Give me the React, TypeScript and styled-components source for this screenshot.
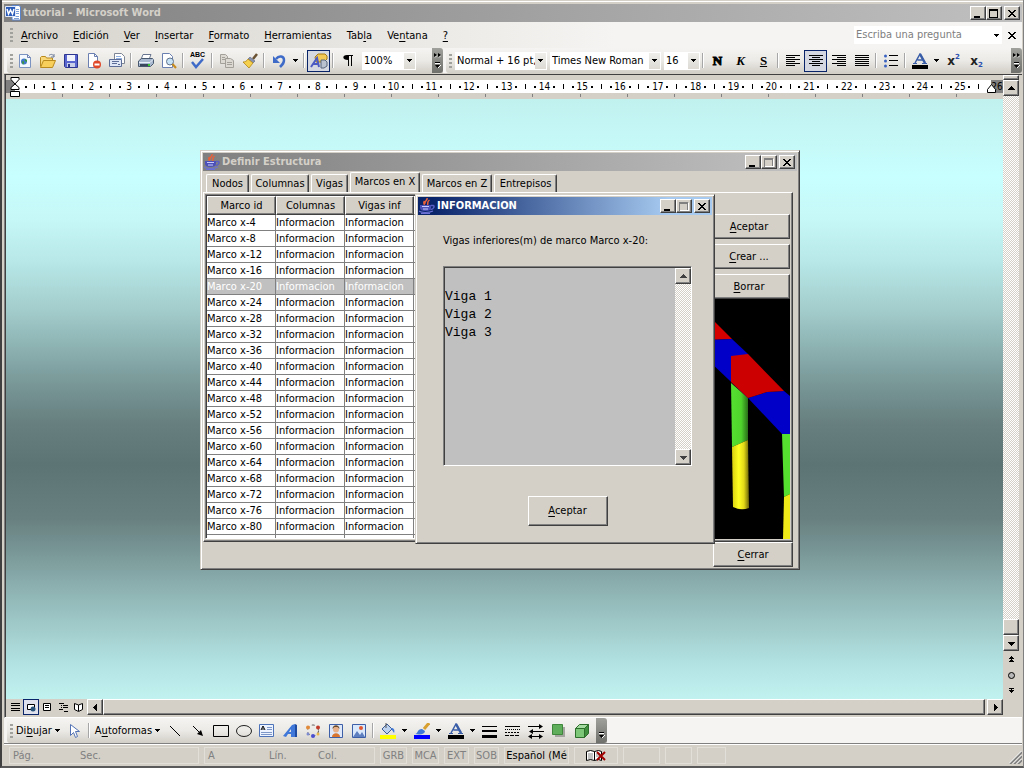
import React from "react";
import styled, { createGlobalStyle, css } from "styled-components";

const FACE = "#d4d0c8";
const SHADOW = "#808080";
const DARK = "#404040";
const NAVY = "#0a246a";

const Global = createGlobalStyle`
  *, *::before, *::after { box-sizing: border-box; }
  body { margin: 0; background: ${FACE}; }
  body, button, select, input, table {
    font: 11px/14px "DejaVu Sans Condensed", "DejaVu Sans", sans-serif;
    color: #000;
  }
  button { margin: 0; padding: 0; border: 0; background: none; }
  svg { display: block; flex: none; }
  u { text-underline-offset: 2px; }
`;

const raised = css`
  border: 1px solid;
  border-color: #fff ${DARK} ${DARK} #fff;
  box-shadow: inset -1px -1px ${SHADOW};
  background: ${FACE};
`;

/* ---------- application frame ---------- */

const Frame = styled.div`
  display: flex;
  flex-direction: column;
  min-height: 100vh;
  border-left: 2px solid ${DARK};
  border-right: 1px solid ${SHADOW};
  border-bottom: 2px solid #5a5a5a;
  padding: 1px 1px 0 2px;
  background: ${FACE};
`;

const TitleBar = styled.header<{ $active?: boolean }>`
  display: flex;
  align-items: center;
  gap: 2px;
  height: 18px;
  flex: none;
  padding: 0 2px 0 1px;
  font-weight: bold;
  color: ${(p) => (p.$active ? "#fff" : FACE)};
  background: ${(p) =>
    p.$active
      ? "linear-gradient(90deg, #0a246a 5%, #a6caf0 85%)"
      : "linear-gradient(90deg, #808080, #c0c0c0)"};
`;

const TitleText = styled.h1`
  flex: 1;
  margin: 0;
  font: inherit;
  white-space: nowrap;
`;

const TopEdge = styled.div`
  height: 3px;
  flex: none;
  margin: 0 -1px 0 -2px;
  border-top: 1px solid #fff;
`;

const WinButtons = styled.div`
  display: flex;
`;

const WinButton = styled.button<{ $gap?: boolean }>`
  ${raised}
  width: 16px;
  height: 14px;
  display: flex;
  align-items: center;
  justify-content: center;
  margin-left: ${(p) => (p.$gap ? 2 : 0)}px;
`;

const MenuBar = styled.nav`
  display: flex;
  align-items: center;
  height: 26px;
  flex: none;
  padding: 0 0 0 6px;
  background: linear-gradient(90deg, #d6d3cc, #f5f4f2 60%);
`;

const Grip = styled.span`
  width: 3px;
  height: 14px;
  flex: none;
  background: repeating-linear-gradient(#a0a09c 0 2px, transparent 2px 4px);
`;

const MenuButton = styled.button`
  padding: 4px 7px 2px 8px;
`;

const AskBox = styled.div`
  display: flex;
  align-items: center;
  margin-left: auto;
  width: 148px;
  height: 18px;
  background: #fff;
`;

const AskInput = styled.input`
  flex: 1;
  min-width: 0;
  border: 0;
  padding: 0 2px;
  background: transparent;
  outline: 0;
  &::placeholder { color: ${SHADOW}; opacity: 1; }
`;

const CloseDocument = styled.button`
  display: flex;
  align-items: center;
  justify-content: center;
  width: 20px;
  height: 18px;
`;

const ArrowButton = styled.button`
  width: 11px;
  height: 18px;
  display: flex;
  align-items: center;
  justify-content: center;
`;

/* ---------- toolbars ---------- */

const BarRow = styled.div`
  display: flex;
  height: 25px;
  flex: none;
  gap: 3px;
  padding-left: 3px;
  background: #f5f4f2;
`;

const Bar = styled.div<{ $grow?: boolean }>`
  display: flex;
  align-items: center;
  flex: ${(p) => (p.$grow ? "1" : "none")};
  min-width: 0;
  padding-left: 3px;
  border-radius: 3px 0 0 3px;
  background: linear-gradient(#f5f4f2, #eceae6 50%, #d2cfc8);
`;

const Tool = styled.button<{ $on?: boolean }>`
  width: 23px;
  height: 22px;
  flex: none;
  display: flex;
  align-items: center;
  justify-content: center;
  ${(p) => p.$on && `background: #d5d8e0; border: 1px solid ${NAVY};`}
`;

const TextTool = styled.button`
  display: flex;
  align-items: center;
  gap: 3px;
  height: 22px;
  padding: 0 3px;
  white-space: nowrap;
`;

const Rule = styled.span`
  width: 2px;
  height: 15px;
  flex: none;
  margin: 0 2px;
  background: linear-gradient(90deg, #a6a6a6 50%, #fff 50%);
`;

const Combo = styled.span<{ $w: number }>`
  display: flex;
  width: ${(p) => p.$w}px;
  height: 18px;
  flex: none;
  margin-left: 3px;
  background: #fff;
  padding: 1px 1px 1px 0;
`;

const ComboSelect = styled.select`
  appearance: none;
  flex: 1;
  min-width: 0;
  border: 0;
  padding: 0 0 0 2px;
  background: #fff;
  outline: 0;
`;

const ComboArrow = styled.span`
  width: 11px;
  display: flex;
  align-items: center;
  justify-content: center;
  background: linear-gradient(#efeeea, #dcdad3);
`;

const Cap = styled.button`
  display: flex;
  flex-direction: column;
  align-items: center;
  justify-content: space-between;
  width: 11px;
  align-self: stretch;
  flex: none;
  padding: 5px 0 4px;
  border-radius: 0 3px 3px 0;
  background: linear-gradient(#a0a09c, #6f6f6c);
`;

const Spacer = styled.span<{ $w?: number }>`
  flex: ${(p) => (p.$w ? `0 0 ${p.$w}px` : "1")};
`;

/* ---------- work area ---------- */

const Work = styled.div`
  display: flex;
  flex: 1;
  min-height: 0;
  margin-top: 1px;
  padding: 0 3px 2px 1px;
  border-top: 1px solid ${DARK};
  border-left: 1px solid ${SHADOW};
  border-bottom: 1px solid #fff;
  box-shadow: inset 1px 0 ${DARK};
`;

const Sheet = styled.main`
  display: flex;
  flex-direction: column;
  flex: 1;
  min-width: 0;
`;

const RulerBox = styled.div`
  height: 24px;
  flex: none;
  padding-top: 5px;
`;

const RulerStrip = styled.div`
  display: flex;
  height: 13px;
  background: #fff;
  line-height: 13px;
  font-size: 10px;
`;

const RulerEdge = styled.span<{ $w: number }>`
  display: flex;
  align-items: center;
  justify-content: center;
  width: ${(p) => p.$w}px;
  flex: none;
  background: ${SHADOW};
`;

const RulerCells = styled.div`
  display: flex;
  flex: 1;
  min-width: 0;
`;

const Unit = styled.span`
  display: grid;
  grid-template-columns: repeat(4, minmax(0, 1fr));
  flex: 1;
`;

const Slot = styled.span<{ $w?: number }>`
  display: flex;
  align-items: center;
  justify-content: center;
  ${(p) => p.$w && `width: ${p.$w}px; flex: none;`}
`;

const Mark = styled.i<{ $h: number }>`
  width: ${(p) => (p.$h > 2 ? 1 : 2)}px;
  height: ${(p) => p.$h}px;
  flex: none;
  background: #000;
`;

const TabTicks = styled.div`
  display: flex;
  height: 3px;
  margin: 1px 0 0 56px;
  span { flex: 1; border-left: 1px solid ${SHADOW}; }
`;

const Indent = styled.span`
  position: relative;
  width: 0;
  svg { position: absolute; left: -5px; top: -3px; }
`;

const RightIndent = styled(Indent)`
  svg { top: 3px; left: -4px; }
`;

const Desk = styled.section`
  position: relative;
  flex: 1;
  min-height: 600px;
  overflow: hidden;
  background: linear-gradient(
    #c1f1ef, #c8ffff 13%, #c6f8f7 20%, #b8e8e8 27%, #a3cdcc 35%, #95bcbc 39%, #7a9999 47%,
    #677f7f 54%, #5d7474 61%, #698080 70%, #7b9999 76%, #95bbbb 84%, #b2e2e2 94%, #c2f2f0
  );
`;

const BottomRow = styled.div`
  display: flex;
  align-items: center;
  height: 16px;
  flex: none;
  padding-left: 1px;
`;

const ViewButton = styled.button<{ $on?: boolean }>`
  width: 16px;
  height: 16px;
  flex: none;
  display: flex;
  align-items: center;
  justify-content: center;
  ${(p) => p.$on && `border: 1px solid ${NAVY}; background: #dfe2ec;`}
`;

const ScrollButton = styled.button<{ $h?: number }>`
  ${raised}
  width: 16px;
  height: ${(p) => p.$h ?? 16}px;
  flex: none;
  display: flex;
  align-items: center;
  justify-content: center;
`;

const HThumb = styled.div`
  ${raised}
  flex: 1;
  height: 16px;
  margin-right: 2px;
`;

const VScroll = styled.div`
  display: flex;
  flex-direction: column;
  width: 16px;
  flex: none;
`;

const Track = styled.div`
  flex: 1;
  background: repeating-conic-gradient(#fff 0 25%, ${FACE} 0 50%) 0 0 / 2px 2px;
`;

const BrowseButton = styled.button`
  height: 16px;
  display: flex;
  align-items: center;
  justify-content: center;
`;

const StatusBar = styled.footer`
  display: flex;
  gap: 5px;
  height: 23px;
  flex: none;
  padding: 3px 0 2px 5px;
  border-top: 1px solid ${SHADOW};
  box-shadow: inset 0 1px #fff;
  color: ${SHADOW};
`;

const StatusCell = styled.div<{ $w: number; $on?: boolean; $center?: boolean }>`
  display: flex;
  align-items: center;
  justify-content: ${(p) => (p.$center ? "center" : "flex-start")};
  width: ${(p) => p.$w}px;
  overflow: hidden;
  white-space: nowrap;
  border: 1px solid #e2dfd9;
  padding: 0 ${(p) => (p.$center ? 0 : 3)}px;
  color: ${(p) => (p.$on ? "#000" : SHADOW)};
`;

const StatusField = styled.span<{ $w: number }>`
  width: ${(p) => p.$w}px;
`;

const Resize = styled.span`
  margin-left: auto;
  align-self: flex-end;
`;

/* ---------- java windows ---------- */

const JavaWindow = styled.section<{ $x: number; $y: number; $w: number; $h: number }>`
  position: absolute;
  left: ${(p) => p.$x}px;
  top: ${(p) => p.$y}px;
  width: ${(p) => p.$w}px;
  height: ${(p) => p.$h}px;
  display: flex;
  flex-direction: column;
  padding: 2px;
  background: ${FACE};
  border: 1px solid;
  border-color: ${FACE} ${DARK} ${DARK} ${FACE};
  box-shadow: inset 1px 1px #fff, inset -1px -1px ${SHADOW};
`;

const Tabs = styled.div`
  display: flex;
  align-items: flex-end;
  gap: 2px;
  height: 21px;
  padding-left: 3px;
`;

const Tab = styled.button<{ $on?: boolean; $w: number }>`
  width: ${(p) => p.$w}px;
  height: ${(p) => (p.$on ? 20 : 18)}px;
  padding-bottom: ${(p) => (p.$on ? 1 : 0)}px;
  border: 1px solid;
  border-color: #fff ${DARK} transparent #fff;
  border-bottom: 0;
  border-radius: 2px 2px 0 0;
  box-shadow: inset -1px 0 ${SHADOW};
  white-space: nowrap;
`;

const TabPanel = styled.div`
  display: flex;
  flex: 1;
  min-height: 0;
  margin-right: 4px;
  padding: 1px 2px 0 1px;
  border: 1px solid;
  border-color: #fff ${DARK} ${DARK} #fff;
  box-shadow: inset -1px -1px ${SHADOW};
`;

const TableBox = styled.div`
  flex: 1;
  margin-right: 3px;
  margin-bottom: 2px;
  overflow: hidden;
  background: #fff;
  border: 1px solid;
  border-color: ${SHADOW} #fff #fff ${SHADOW};
  box-shadow: inset 1px 1px ${DARK};
  padding: 1px 0 0 1px;
`;

const Grid = styled.table`
  width: 100%;
  table-layout: fixed;
  border-collapse: separate;
  border-spacing: 0;
  th, td { padding: 0; overflow: hidden; white-space: nowrap; }
  th:not(:last-child) { width: 69px; }
`;

const HeadCell = styled.th`
  ${raised}
  height: 19px;
  font-weight: normal;
`;

const Row = styled.tr<{ $on?: boolean }>`
  td {
    height: 16px;
    border-right: 1px solid ${SHADOW};
    border-bottom: 1px solid ${SHADOW};
    color: ${(p) => (p.$on ? "#fff" : "#000")};
    background: ${(p) => (p.$on ? "#c0c0c0" : "#fff")};
  }
`;

const StubRow = styled.tr`
  td { height: 3px; border-right: 1px solid ${SHADOW}; }
`;

const SideColumn = styled.div`
  display: flex;
  flex-direction: column;
  gap: 5px;
  width: 82px;
  padding-top: 20px;
  margin-bottom: 2px;
`;

const PushButton = styled.button<{ $w?: number; $h?: number }>`
  ${raised}
  width: ${(p) => (p.$w ? `${p.$w}px` : "auto")};
  height: ${(p) => p.$h ?? 25}px;
  flex: none;
`;

const View3D = styled.div`
  flex: 1;
  min-height: 0;
  margin-top: -5px;
  background: #000;
`;

const Footer = styled.div`
  display: flex;
  justify-content: flex-end;
  padding-right: 4px;
`;

const InfoBody = styled.div`
  display: flex;
  flex-direction: column;
  flex: 1;
  padding: 19px 20px 15px 25px;
`;

const Message = styled.label`
  margin-bottom: 18px;
`;

const TextPane = styled.div`
  display: flex;
  height: 200px;
  border: 1px solid;
  border-color: ${SHADOW} #fff #fff ${SHADOW};
  box-shadow: inset 1px 1px ${DARK};
  background: #c0c0c0;
  padding: 1px 0 0 1px;
`;

const TextArea = styled.textarea`
  flex: 1;
  min-width: 0;
  border: 0;
  padding: 2px 0;
  resize: none;
  outline: 0;
  overflow: hidden;
  color: #000;
  background: transparent;
  font: 13px/18px "Liberation Mono", monospace;
`;

const PaneScroll = styled(VScroll)`
  background: ${FACE};
`;

const ButtonRow = styled.div`
  display: flex;
  justify-content: center;
  margin-top: 30px;
`;

/* ---------- glyphs ---------- */

const Ico = ({ children, w = 16, h = 16, vb }: { children: React.ReactNode; w?: number; h?: number; vb?: string }) => (
  <svg width={w} height={h} viewBox={vb ?? `0 0 ${w} ${h}`} fill="none" aria-hidden="true">
    {children}
  </svg>
);

type Dir = "up" | "down" | "left" | "right";
const triangles: Record<Dir, string> = {
  down: "M0 2h7v1h-1v1h-1v1h-1v1h-1v-1h-1v-1h-1v-1h-1z",
  up: "M0 5h7v-1h-1v-1h-1v-1h-1v-1h-1v1h-1v1h-1v1h-1z",
  left: "M5 0v7h-1v-1h-1v-1h-1v-1h-1v-1h1v-1h1v-1h1v-1z",
  right: "M2 0v7h1v-1h1v-1h1v-1h1v-1h-1v-1h-1v-1h-1v-1z",
};
const Tri = ({ dir, color = "#000" }: { dir: Dir; color?: string }) => (
  <Ico w={7} h={7}><path d={triangles[dir]} fill={color} /></Ico>
);
const Caret = () => <Ico w={5} h={3}><path d="M0 0h5v1h-1v1h-1v1h-1v-1h-1v-1h-1z" fill="#000" /></Ico>;

const MinGlyph = () => <Ico w={10} h={9}><path d="M1 7h6v2h-6z" fill="#000" /></Ico>;
const MaxGlyph = ({ off }: { off?: boolean }) => (
  <Ico w={10} h={9}>
    <path fillRule="evenodd" d="M0 0h9v9h-9zM1 2v6h7v-6z" fill={off ? "#808080" : "#000"} />
    {off && <path d="M9.500 1v8M1 8.500h8" stroke="#fff" />}
  </Ico>
);
const CloseGlyph = () => (
  <Ico w={8} h={7}>
    <path fill="#000" d="M0 0h2v1h1v1h2v-1h1v-1h2v1h-1v1h-1v1h-1v1h1v1h1v1h1v1h-2v-1h-1v-1h-2v1h-1v1h-2v-1h1v-1h1v-1h1v-1h-1v-1h-1v-1h-1z" />
  </Ico>
);

const JavaCup = () => (
  <Ico>
    <path d="M8 0c1 2-3 3-2 6M10.500 2c-3 2-1 3-2 5M5.500 3c-1 1-1 2 0 4" stroke="#e8603a" strokeWidth="1.500" />
    <path d="M1 7h11v3c0 2-2 3-5.500 3S1 12 1 10z" fill="#4a50b8" />
    <path d="M3 8.500h7M4 11h5" stroke="#c7caff" />
    <path d="M12 7.500h2c2 0 1 4-2.500 4" stroke="#5a5fc4" strokeWidth="1.500" />
    <path d="M0 13c2 2 10 2 14 0M2 15.500h9" stroke="#6a70d4" strokeWidth="1.200" />
  </Ico>
);

const WordLogo = () => (
  <Ico>
    <path d="M7 .5h7l1.500 1.500v13h-8.500z" fill="#fff" stroke="#5b83c8" />
    <path d="M11 4.500h3M11 6.500h3M11 8.500h3M9 11.500h5M9 13.500h5" stroke="#7ea0d8" />
    <path d="M.5 1.500h10v10h-10z" fill="#2c5cb8" stroke="#dfe8f8" />
    <path d="M2 4l1.500 5 2-4 2 4L9 4" stroke="#fff" strokeWidth="1.500" />
  </Ico>
);

const page = <path d="M3.500.5h6l3 3v11h-9z" fill="#fff" stroke="#6b7fb0" />;
const icons = {
  fresh: <Ico><path d="M2.500 1.500h8l3 3v10h-11z" fill="#f4f8ff" stroke="#7b93c0" /><path d="M10.500 1.500v3h3" stroke="#6b7fb0" /><circle cx="7" cy="8.500" r="3" fill="#3f78c9" /><path d="M5 9c1-2 2-1 2 1l-1 2zM8 6l2 1v2l-2-1z" fill="#3d9a38" /></Ico>,
  open: <Ico><path d="M.5 13.500v-9l1-1h4l1 1.500h6v3" fill="#f8d878" stroke="#b98a1e" /><path d="M.5 14.500l3-7h12l-3 7z" fill="#f9cf5c" stroke="#b98a1e" /><path d="M9 2.500c2-2 4-1 5 1m0-2.500v3h-3" stroke="#6f7f9c" /></Ico>,
  save: <Ico><path d="M1.500 1.500h13v13h-12l-1-1z" fill="#5a66cf" stroke="#2c3691" /><path d="M4 2h8v6h-8z" fill="#f0f3fb" /><path d="M4 10h8v4h-8z" fill="#c8cde8" /><path d="M5 11h2v3h-2z" fill="#2c3691" /></Ico>,
  permit: <Ico><path d="M2.500.5h6l3 3v11h-9z" fill="#fff" stroke="#6b7fb0" /><path d="M8.500.5v3h3" stroke="#6b7fb0" /><circle cx="11" cy="11.500" r="4" fill="#e0482a" /><path d="M8.500 10.500h5v2h-5z" fill="#fff" /></Ico>,
  mail: <Ico><path d="M5.500.5h7l3 3v7h-10z" fill="#fff" stroke="#7d8494" /><path d="M7 3.500h5M7 5.500h6" stroke="#8fb0e0" /><path d="M.5 6.500h12v7h-12z" fill="#dfe7f6" stroke="#5c6e98" /><path d="M3 8.500h7M3 10.500h5M9 11.500h2" stroke="#5c6e98" /></Ico>,
  print: <Ico><path d="M5 1.500h8l-2 5h-8z" fill="#fff" stroke="#67758f" /><path d="M.5 8l3-2.500h11l1 1v4l-3 3h-12z" fill="#a8b9cf" stroke="#48586f" /><path d="M1 9.500h11l3-3" stroke="#e8f0fa" /><path d="M2 12h9" stroke="#3a475c" strokeWidth="2" /><path d="M10 11h2v2h-2z" fill="#38d030" /></Ico>,
  preview: <Ico><path d="M1.500.5h7l3 3v11h-10z" fill="#fff" stroke="#6b7fb0" /><circle cx="9" cy="8.500" r="3.500" fill="#c7e2f5" stroke="#61728c" /><path d="M11.500 11l3.500 4" stroke="#c78a1c" strokeWidth="2" /></Ico>,
  copy: <Ico><path d="M1.500 1.500h5l2 2v7h-7z" fill="#dcd9d2" stroke="#a3a09a" /><path d="M6.500 5.500h5l3 2v7h-8z" fill="#dcd9d2" stroke="#a3a09a" /><path d="M3 4.500h3M3 6.500h3M8 9.500h5M8 11.500h5" stroke="#a3a09a" /></Ico>,
  brush: <Ico><path d="M15 1l-4 5" stroke="#6a5233" strokeWidth="2.500" /><path d="M8 4l5 4-2 2-5-4z" fill="#8793ae" stroke="#566080" strokeWidth=".6" /><path d="M6 6l5 4-4 5-6-6c2 0 4-1 5-3z" fill="#f5d04c" stroke="#b18516" strokeWidth=".8" /></Ico>,
  undo: <Ico><path d="M5 6c3-4 8-3 8 1 0 3-1 4-4 7" stroke="#3f6bc8" strokeWidth="2.500" /><path d="M2 3v7h7z" fill="#3f6bc8" /></Ico>,
  shapes: <Ico w={18}><path d="M5 4l3-3h7l2 2v3l-3 3h-8z" fill="#f2c957" stroke="#a77a13" /><path d="M11 7h4l2 2v4l-3 2h-3z" fill="#b9c2ce" stroke="#59677c" /><path d="M1 14l6-9 2 9M3 11h6" stroke="#4c5bc4" strokeWidth="2" /></Ico>,
  pilcrow: <Ico w={12}><path d="M5 2h6v1h-1v10h-1v-10h-2v10h-1v-6c-6 0-6-5-1-5z" fill="#000" /></Ico>,
  bullets: <Ico>{[2, 7, 12].map((y) => <React.Fragment key={y}><circle cx="2.500" cy={y + 1} r="1.500" fill="#3a62c0" /><path d={`M6 ${y}h9v1h-9z`} fill="#000" /></React.Fragment>)}</Ico>,
  pointer: <Ico><path d="M4.500 1.500v11l3-3 2 5 2-1-2-5h4z" fill="#fff" stroke="#5272b4" /></Ico>,
  line: <Ico><path d="M3 3l10 10" stroke="#000" /></Ico>,
  arrow: <Ico><path d="M3 3l8 8" stroke="#000" /><path d="M13 13l-6-2 4-4z" fill="#000" /></Ico>,
  rect: <Ico><path d="M.5 2.500h15v11h-15z" stroke="#000" /></Ico>,
  oval: <Ico><ellipse cx="8" cy="8" rx="7.500" ry="5.500" stroke="#222" /></Ico>,
  textbox: <Ico><path d="M.5 1.500h14v12h-14z" fill="#eef4ff" stroke="#4d72b8" /><path d="M2 7l2-4 2 4M3 6h2" stroke="#000" /><path d="M8 4.500h5M8 6.500h5M2 9.500h11M2 11.500h11" stroke="#7d97c8" /></Ico>,
  wordart: <Ico><path d="M1 13l9-11 3-1v13h-4v-3h-3l-2 3zM7 9h2v-3z" fill="#3f78d8" fillRule="evenodd" /><path d="M13 1l2 1v12h-2z" fill="#1f4ba0" /></Ico>,
  diagram: <Ico><circle cx="8" cy="7.500" r="5.500" stroke="#555" strokeDasharray="3 3" /><circle cx="3" cy="4.500" r="2" fill="#e08a3a" /><circle cx="13" cy="4.500" r="2" fill="#c23c2a" /><circle cx="8" cy="13" r="2" fill="#4a4fd0" /><circle cx="3" cy="11" r="1.500" fill="#7d8bd0" /><circle cx="13" cy="11" r="1.500" fill="#eab84a" /></Ico>,
  clipart: <Ico><path d="M1.500 1.500h13v13h-13z" fill="#dfe8f8" stroke="#3c5fa8" /><circle cx="8" cy="6.500" r="3" fill="#e8b088" /><path d="M4.500 6c0-5 7-5 7 0l-2-2h-3z" fill="#6b4a2a" /><path d="M4 14c0-5 8-5 8 0z" fill="#d8752f" /></Ico>,
  picture: <Ico><path d="M1.500 1.500h13v13h-13z" fill="#d9e8fb" stroke="#3c5fa8" /><circle cx="10" cy="5" r="2" fill="#e0562f" /><path d="M2 14l4-6 3 4 2-3 3 5z" fill="#5d7fc0" /></Ico>,
  fill: <Ico><path d="M2 6l5-5 5 5-5 5z" fill="#bcd2ef" stroke="#3d5d94" /><path d="M11 5c3 0 4 2 3 5l-2-3z" fill="#3f78d8" /><path d="M6 0v5" stroke="#555" /><path d="M0 12h16v4H0z" fill="#ff0" /></Ico>,
  pen: <Ico><path d="M15 0l-5 6" stroke="#d8a030" strokeWidth="3" /><path d="M1 11c3 0 2-5 7-5l3 2c0 3-4 4-10 3z" fill="#3f78d8" /><path d="M0 12h16v4H0z" fill="#00f" /></Ico>,
  fontColor: <Ico><path d="M3 10l5-9 5 9M5.500 7h5" stroke="#3a5da8" strokeWidth="1.500" /><path d="M8 1l5 9" stroke="#3a5da8" strokeWidth="2.500" /><path d="M1 10.500h4M10 10.500h5" stroke="#3a5da8" /><path d="M0 12h16v4H0z" fill="#000" /></Ico>,
  weights: <Ico><path d="M0 3h15v1H0zM0 7h15v2H0zM0 12h15v3H0z" fill="#000" /></Ico>,
  dashes: <Ico><path d="M0 3.500h15" stroke="#000" /><path d="M0 6.500h15" stroke="#000" strokeDasharray="1 1" /><path d="M0 9.500h15" stroke="#000" strokeDasharray="2 1" /><path d="M0 12.500h15" stroke="#000" strokeDasharray="4 1" /></Ico>,
  arrows: <Ico><path d="M0 3.500h12M4 8.500h12M3 13.500h10" stroke="#000" /><path d="M11 1l4 2.500-4 2.500zM5 6L1 8.500 5 11zM4 11L0 13.500 4 16zM11 11l4 2.500-4 2.500z" fill="#000" /></Ico>,
  shadow: <Ico><path d="M4 4h10v10H4z" fill="#a5a5a0" /><path d="M1.500 1.500h10v10h-10z" fill="#5fae5c" stroke="#3d863b" /></Ico>,
  cube: <Ico><path d="M1.500 5.500h9v9h-9z" fill="#7cc878" stroke="#2d6e2c" /><path d="M1.500 5.500l4-4h9l-4 4z" fill="#a5dba0" stroke="#2d6e2c" /><path d="M14.500 1.500v9l-4 4v-9z" fill="#3f8f3e" stroke="#2d6e2c" /></Ico>,
};

const AlignIcon = ({ mode }: { mode: "l" | "c" | "r" | "j" }) => (
  <Ico w={14} h={12}>
    {[0, 2, 4, 6, 8, 10].map((y, i) => {
      const w = mode === "j" || i % 2 === 0 ? 14 : mode === "c" ? 8 : 9;
      const x = mode === "r" ? 14 - w : mode === "c" ? (14 - w) / 2 : 0;
      return <path key={y} d={`M${x} ${y}h${w}v1h-${w}z`} fill="#000" />;
    })}
  </Ico>
);

const Letter = styled.span<{ $italic?: boolean; $under?: boolean }>`
  font: ${(p) => (p.$italic ? "italic " : "")}bold 13px/16px "Liberation Serif", serif;
  text-decoration: ${(p) => (p.$under ? "underline" : "none")};
  -webkit-text-stroke: ${(p) => (p.$italic || p.$under ? 0 : 1)}px #000;
`;

const Script = styled.span`
  display: flex;
  font: bold 12px/16px "DejaVu Sans", sans-serif;
  color: #222;
  sup, sub { font-size: 7px; line-height: 8px; color: #2a4fb0; }
  sup { align-self: flex-start; }
  sub { align-self: flex-end; }
`;

const SpellLabel = styled.span`
  display: flex;
  flex-direction: column;
  align-items: center;
  font: bold 7px/6px "Liberation Sans", sans-serif;
`;

const CapMarks = ({ chevrons = true }: { chevrons?: boolean }) => (
  <>
    {chevrons ? <Ico w={7} h={5}><path d="M0 0l3 2L0 4zM4 0l3 2L4 4z" fill="#000" /><path d="M1 4.500l2-2M5 4.500l2-2" stroke="#fff" strokeWidth=".8" /></Ico> : <span />}
    <Ico w={7} h={7}><path d="M1 0h5v1H1z" fill="#000" /><path d="M1 1h5v1H1z" fill="#fff" /><path d="M1 3h5l-2.500 3z" fill="#000" /><path d="M4 6l3-3" stroke="#fff" /></Ico>
  </>
);

const Scene = () => (
  <svg width="100%" height="100%" viewBox="708 299 82 240" preserveAspectRatio="xMaxYMin slice" role="img" aria-label="Vista de la estructura">
    <defs>
      <linearGradient id="green"><stop offset="0" stopColor="#55e030" /><stop offset=".6" stopColor="#4fd42c" /><stop offset="1" stopColor="#2a6e18" /></linearGradient>
      <linearGradient id="yellow"><stop offset="0" stopColor="#d8d010" /><stop offset=".4" stopColor="#ffff20" /><stop offset=".7" stopColor="#e4da18" /><stop offset="1" stopColor="#6b6508" /></linearGradient>
    </defs>
    <path d="M708 315l24 24-24 1z" fill="#d40000" />
    <path d="M708 340l24-1 16 15v44l-40-38z" fill="#0000c8" />
    <path d="M731 383l17 15v42l-16 7z" fill="url(#green)" />
    <path d="M732 447l16-7 1 68q-8 3-16-1z" fill="url(#yellow)" />
    <path d="M748 398l19-6 17-1 6 5v38h-8z" fill="#0000c8" />
    <path d="M731 356l17-2 36 37-17 1-19 6-17-16z" fill="#cc0000" />
    <path d="M782 434h8v60l-6 3z" fill="#55e030" />
    <path d="M784 497l6-3v45h-7z" fill="#f0ea18" />
  </svg>
);

/* ---------- composed parts ---------- */

const WindowControls = ({ maxOff }: { maxOff?: boolean }) => (
  <WinButtons>
    <WinButton aria-label="Minimizar"><MinGlyph /></WinButton>
    <WinButton aria-label="Maximizar" disabled={maxOff}><MaxGlyph off={maxOff} /></WinButton>
    <WinButton aria-label="Cerrar" $gap><CloseGlyph /></WinButton>
  </WinButtons>
);

const ToolIcon = ({ name, label }: { name: keyof typeof icons; label: string }) => (
  <Tool aria-label={label}>{icons[name]}</Tool>
);

const DropArrow = ({ label }: { label: string }) => (
  <ArrowButton aria-label={label}><Caret /></ArrowButton>
);

const Choice = ({ label, value, width }: { label: string; value: string; width: number }) => (
  <Combo $w={width}>
    <ComboSelect aria-label={label} defaultValue={value}><option>{value}</option></ComboSelect>
    <ComboArrow><Caret /></ComboArrow>
  </Combo>
);

const menus: [string, string, string][] = [
  ["", "A", "rchivo"], ["", "E", "dición"], ["", "V", "er"], ["", "I", "nsertar"], ["", "F", "ormato"],
  ["", "H", "erramientas"], ["Tab", "l", "a"], ["Ve", "n", "tana"], ["", "?", ""],
];

const tabs: [string, number][] = [
  ["Nodos", 43], ["Columnas", 58], ["Vigas", 37], ["Marcos en X", 70], ["Marcos en Z", 70], ["Entrepisos", 63],
];

const frames = Array.from({ length: 20 }, (_, i) => `Marco x-${(i + 1) * 4}`);

const Ruler = () => (
  <RulerBox>
    <RulerStrip>
      <RulerEdge $w={9} />
      <Indent>
        <Ico w={10} h={20}>
          <path d="M1 .5h8v2l-4 4.500-4-4.500zM1 12.500v-2l4-3.500 4 3.500v2zM.5 14.500h9v5h-9z" fill="#fff" stroke="#000" />
        </Ico>
      </Indent>
      <Spacer $w={6} />
      <Slot $w={9}><Mark $h={2} /></Slot>
      <RulerCells>
        {Array.from({ length: 25 }, (_, i) => (
          <Unit key={i}>
            <Slot><Mark $h={5} /></Slot>
            <Slot><Mark $h={2} /></Slot>
            <Slot>{i + 1}</Slot>
            <Slot><Mark $h={2} /></Slot>
          </Unit>
        ))}
      </RulerCells>
      <Slot $w={9}><Mark $h={5} /></Slot>
      <Spacer $w={8} />
      <RightIndent>
        <Ico w={10} h={10}><path d="M.5 9.500v-3l4-5 4 5v3z" fill="#fff" stroke="#000" /></Ico>
      </RightIndent>
      <RulerEdge $w={12}>26</RulerEdge>
    </RulerStrip>
    <TabTicks>{Array.from({ length: 20 }, (_, i) => <span key={i} />)}</TabTicks>
  </RulerBox>
);

const StructureWindow = () => (
  <JavaWindow $x={194} $y={51} $w={600} $h={420} aria-label="Definir Estructura">
    <TitleBar><JavaCup /><TitleText as="h2">Definir Estructura</TitleText><WindowControls maxOff /></TitleBar>
    <Tabs role="tablist">
      {tabs.map(([name, w]) => {
        const on = name === "Marcos en X";
        return <Tab key={name} role="tab" aria-selected={on} $on={on} $w={w}>{name}</Tab>;
      })}
    </Tabs>
    <TabPanel role="tabpanel">
      <TableBox>
        <Grid>
          <thead>
            <tr><HeadCell>Marco id</HeadCell><HeadCell>Columnas</HeadCell><HeadCell>Vigas inf</HeadCell><HeadCell /></tr>
          </thead>
          <tbody>
            {frames.map((f) => (
              <Row key={f} $on={f === "Marco x-20"}><td>{f}</td><td>Informacion</td><td>Informacion</td><td /></Row>
            ))}
            <StubRow><td /><td /><td /><td /></StubRow>
          </tbody>
        </Grid>
      </TableBox>
      <SideColumn>
        <PushButton><u>A</u>ceptar</PushButton>
        <PushButton><u>C</u>rear ...</PushButton>
        <PushButton><u>B</u>orrar</PushButton>
        <View3D><Scene /></View3D>
      </SideColumn>
    </TabPanel>
    <Footer><PushButton $w={80}><u>C</u>errar</PushButton></Footer>
  </JavaWindow>
);

const InfoWindow = () => (
  <JavaWindow $x={409} $y={95} $w={300} $h={350} role="dialog" aria-label="INFORMACION">
    <TitleBar $active><JavaCup /><TitleText as="h2">INFORMACION</TitleText><WindowControls maxOff /></TitleBar>
    <InfoBody>
      <Message htmlFor="beams">Vigas inferiores(m) de marco Marco x-20:</Message>
      <TextPane>
        <TextArea id="beams" readOnly defaultValue={"\nViga 1\nViga 2\nViga 3"} />
        <PaneScroll>
          <ScrollButton aria-label="Subir"><Tri dir="up" color={DARK} /></ScrollButton>
          <Track />
          <ScrollButton aria-label="Bajar"><Tri dir="down" color={DARK} /></ScrollButton>
        </PaneScroll>
      </TextPane>
      <ButtonRow><PushButton $w={80} $h={30}><u>A</u>ceptar</PushButton></ButtonRow>
    </InfoBody>
  </JavaWindow>
);

const StandardBars = () => (
  <BarRow>
    <Bar role="toolbar" aria-label="Estándar">
      <Grip />
      <ToolIcon name="fresh" label="Nuevo" />
      <ToolIcon name="open" label="Abrir" />
      <ToolIcon name="save" label="Guardar" />
      <ToolIcon name="permit" label="Permiso" />
      <ToolIcon name="mail" label="Correo" />
      <Rule />
      <ToolIcon name="print" label="Imprimir" />
      <ToolIcon name="preview" label="Vista preliminar" />
      <Rule />
      <Tool aria-label="Ortografía">
        <SpellLabel>ABC<Ico w={14} h={11}><path d="M2 4l4 5 7-8" stroke="#3f6bc8" strokeWidth="2.500" /></Ico></SpellLabel>
      </Tool>
      <Rule />
      <ToolIcon name="copy" label="Copiar" />
      <ToolIcon name="brush" label="Copiar formato" />
      <Rule />
      <ToolIcon name="undo" label="Deshacer" />
      <DropArrow label="Lista deshacer" />
      <Rule />
      <Tool $on aria-label="Dibujo">{icons.shapes}</Tool>
      <Rule />
      <ToolIcon name="pilcrow" label="Mostrar u ocultar" />
      <Choice label="Zoom" value="100%" width={54} />
      <Spacer $w={16} />
      <Cap aria-label="Opciones"><CapMarks /></Cap>
    </Bar>
    <Bar $grow role="toolbar" aria-label="Formato">
      <Grip />
      <Choice label="Estilo" value="Normal + 16 pt," width={92} />
      <Choice label="Fuente" value="Times New Roman" width={111} />
      <Choice label="Tamaño" value="16" width={36} />
      <Rule />
      <Tool aria-label="Negrita"><Letter>N</Letter></Tool>
      <Tool aria-label="Cursiva"><Letter $italic>K</Letter></Tool>
      <Tool aria-label="Subrayado"><Letter $under>S</Letter></Tool>
      <Rule />
      <Tool aria-label="Izquierda"><AlignIcon mode="l" /></Tool>
      <Tool $on aria-label="Centrar"><AlignIcon mode="c" /></Tool>
      <Tool aria-label="Derecha"><AlignIcon mode="r" /></Tool>
      <Tool aria-label="Justificar"><AlignIcon mode="j" /></Tool>
      <Rule />
      <ToolIcon name="bullets" label="Viñetas" />
      <Rule />
      <ToolIcon name="fontColor" label="Color de fuente" />
      <DropArrow label="Más colores" />
      <Tool aria-label="Superíndice"><Script>x<sup>2</sup></Script></Tool>
      <Tool aria-label="Subíndice"><Script>x<sub>2</sub></Script></Tool>
      <Spacer />
      <Cap aria-label="Opciones"><CapMarks /></Cap>
    </Bar>
  </BarRow>
);

const DrawingBar = () => (
  <BarRow>
    <Bar role="toolbar" aria-label="Dibujo">
      <Grip />
      <TextTool><span>Di<u>b</u>ujar</span><Caret /></TextTool>
      <ToolIcon name="pointer" label="Seleccionar objetos" />
      <Rule />
      <TextTool><span>A<u>u</u>toformas</span><Caret /></TextTool>
      <ToolIcon name="line" label="Línea" />
      <ToolIcon name="arrow" label="Flecha" />
      <ToolIcon name="rect" label="Rectángulo" />
      <ToolIcon name="oval" label="Elipse" />
      <ToolIcon name="textbox" label="Cuadro de texto" />
      <ToolIcon name="wordart" label="WordArt" />
      <ToolIcon name="diagram" label="Diagrama" />
      <ToolIcon name="clipart" label="Imagen prediseñada" />
      <ToolIcon name="picture" label="Imagen" />
      <Rule />
      <ToolIcon name="fill" label="Color de relleno" />
      <DropArrow label="Más rellenos" />
      <ToolIcon name="pen" label="Color de línea" />
      <DropArrow label="Más líneas" />
      <ToolIcon name="fontColor" label="Color de fuente" />
      <DropArrow label="Más colores" />
      <ToolIcon name="weights" label="Estilo de línea" />
      <ToolIcon name="dashes" label="Estilo de guión" />
      <ToolIcon name="arrows" label="Estilo de flecha" />
      <ToolIcon name="shadow" label="Sombra" />
      <ToolIcon name="cube" label="3D" />
      <Spacer $w={3} />
      <Cap aria-label="Opciones"><CapMarks chevrons={false} /></Cap>
    </Bar>
  </BarRow>
);

export default function App() {
  return (
    <Frame>
      <Global />
      <TopEdge />
      <TitleBar><WordLogo /><TitleText>tutorial - Microsoft Word</TitleText><WindowControls /></TitleBar>
      <MenuBar aria-label="Menú">
        <Grip />
        {menus.map(([a, b, c]) => <MenuButton key={b + c}>{a}<u>{b}</u>{c}</MenuButton>)}
        <AskBox>
          <AskInput aria-label="Pregunta" placeholder="Escriba una pregunta" />
          <DropArrow label="Preguntas" />
        </AskBox>
        <CloseDocument aria-label="Cerrar documento"><CloseGlyph /></CloseDocument>
      </MenuBar>
      <StandardBars />
      <Work>
        <Sheet>
          <Ruler />
          <Desk>
            <StructureWindow />
            <InfoWindow />
          </Desk>
          <BottomRow>
            <ViewButton aria-label="Normal"><Ico w={9} h={9}><path d="M0 0h9v1H0zM0 2h9v1H0zM0 5h9v1H0zM0 7h9v1H0z" fill="#000" /></Ico></ViewButton>
            <ViewButton $on aria-label="Web"><Ico w={9} h={9}><path d="M.5 1.500h7v5h-7z" fill="#fff" stroke="#000" /><circle cx="6" cy="6" r="2.500" fill="#28527a" /></Ico></ViewButton>
            <ViewButton aria-label="Impresión"><Ico w={9} h={9}><path d="M.5.5h7v7h-7z" fill="#fff" stroke="#000" /><path d="M2 2.500h4M2 4.500h4" stroke="#000" /></Ico></ViewButton>
            <ViewButton aria-label="Esquema"><Ico w={9} h={9}><path d="M0 .5h5M2 2.500h1M4 2.500h5M2 4.500h1M4 4.500h5M0 6.500h4M5 8.500h4" stroke="#000" /></Ico></ViewButton>
            <ViewButton aria-label="Lectura"><Ico w={10} h={9}><path d="M.5.500l4 1.500 4-1.500v6l-4 2-4-2zM4.500 2v6" fill="#fff" stroke="#000" /></Ico></ViewButton>
            <ScrollButton aria-label="Izquierda"><Tri dir="left" /></ScrollButton>
            <HThumb />
            <ScrollButton aria-label="Derecha"><Tri dir="right" /></ScrollButton>
          </BottomRow>
        </Sheet>
        <VScroll>
          <ScrollButton $h={5} aria-label="Dividir" />
          <ScrollButton aria-label="Subir"><Tri dir="up" /></ScrollButton>
          <Track />
          <ScrollButton aria-label="Posición" />
          <ScrollButton aria-label="Bajar"><Tri dir="down" /></ScrollButton>
          <BrowseButton aria-label="Página anterior"><Ico w={7} h={7}><path d="M3 0h1v1h1v1h1v1H4v1h1v1h1v1H1V5h1V4h1V3H1V2h1V1h1z" fill="#000" /></Ico></BrowseButton>
          <BrowseButton aria-label="Objeto de búsqueda"><Ico w={7} h={7}><circle cx="3.500" cy="3.500" r="3" fill="#b8b8b8" stroke="#000" /></Ico></BrowseButton>
          <BrowseButton aria-label="Página siguiente"><Ico w={7} h={7}><path d="M1 0h5v1H4v1h2v1H5v1H4v1H3V4H2V3H1V2h2V1H1z" fill="#000" /></Ico></BrowseButton>
          <Spacer $w={16} />
        </VScroll>
      </Work>
      <DrawingBar />
      <StatusBar>
        <StatusCell $w={190}><StatusField $w={67}>Pág.</StatusField>Sec.</StatusCell>
        <StatusCell $w={171}><StatusField $w={61}>A</StatusField><StatusField $w={49}>Lín.</StatusField>Col.</StatusCell>
        <StatusCell $w={27} $center>GRB</StatusCell>
        <StatusCell $w={27} $center>MCA</StatusCell>
        <StatusCell $w={25} $center>EXT</StatusCell>
        <StatusCell $w={25} $center>SOB</StatusCell>
        <StatusCell $w={65} $on $center>Español (Mé</StatusCell>
        <StatusCell $w={44} $center>
          <Ico w={22} h={13}>
            <path d="M1.500 2.500l4-1 4 1 4-1 3 1v9l-3-1-4 1-4-1-4 1zM9.500 2.500v9" fill="#fff" stroke="#000" />
            <path d="M3 5h5M3 7h5M3 9h5M11 5h4M11 7h4" stroke="#555" strokeWidth=".7" />
            <path d="M12 3l8 8M20 3l-8 8" stroke="#a00000" strokeWidth="2" />
          </Ico>
        </StatusCell>
        <StatusCell $w={37} />
        <StatusCell $w={27} />
        <StatusCell $w={29} />
        <Resize><Ico w={13} h={13}><path d="M1 13L13 1M5 13l8-8M9 13l4-4" stroke="#808080" strokeWidth="2" /><path d="M0 12.500L12.500 0M4 12.500L12.500 4M8 12.500L12.500 8" stroke="#fff" /></Ico></Resize>
      </StatusBar>
    </Frame>
  );
}
